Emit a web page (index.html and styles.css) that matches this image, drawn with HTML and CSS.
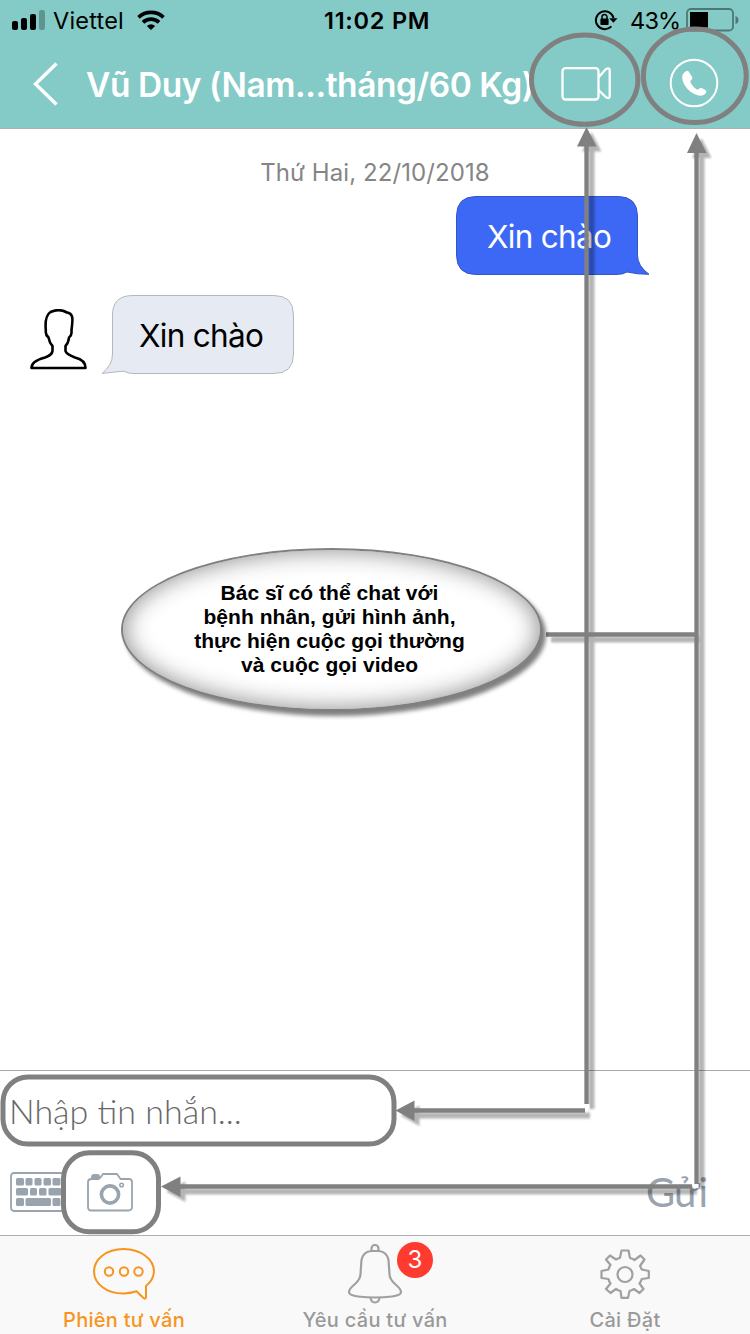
FILE: index.html
```
<!DOCTYPE html>
<html lang="vi">
<head>
<meta charset="utf-8">
<title>Chat</title>
<link rel="stylesheet" href="styles.css">
</head>
<body>
<div class="screen">
  <header class="header">
    <div class="status">
      <div class="status-left">
        <svg class="signal" width="34" height="20" viewBox="0 0 34 20"><rect x="0" y="11" width="6" height="9" rx="2"/><rect x="9" y="8" width="6" height="12" rx="2"/><rect x="18" y="4" width="6" height="16" rx="2"/><rect x="27" y="0" width="6" height="20" rx="2" opacity=".27"/></svg>
        <span class="carrier">Viettel</span>
        <svg class="wifi" width="28" height="20" viewBox="0 0 28 20" fill="none" stroke="#000" stroke-width="3.7"><path d="M1.5 7.4A18.2 18.2 0 0 1 26.5 7.4"/><path d="M6 12.400A11.5 11.5 0 0 1 22 12.400"/><path d="M9.8 15.9Q14 12.5 18.2 15.9L14 20Z" fill="#000" stroke="none"/></svg>
      </div>
      <span class="clock">11:02 PM</span>
      <div class="status-right">
        <svg width="24" height="22" viewBox="0 0 24 22"><path d="M17.4 17.4A9 9 0 1 1 19.6 9" fill="none" stroke="#000" stroke-width="2"/><path d="M15.2 9.2h8.4l-4.2 4.6z"/><rect x="6.4" y="9.5" width="8.2" height="6.5" rx="1"/><path d="M8 10V8a2.5 2.5 0 0 1 5 0v2" fill="none" stroke="#000" stroke-width="1.5"/></svg>
        <span class="percent">43%</span>
        <svg class="battery" width="54" height="24" viewBox="0 0 54 24"><rect x="1" y="1" width="46" height="21.5" rx="4" fill="none" stroke="#4d7975" stroke-width="1.800"/><rect x="4" y="4" width="18" height="15.5"/><path d="M49.5 8q3 1 3 4t-3 4z" fill="#4d7975"/></svg>
      </div>
    </div>
    <div class="nav">
      <svg class="back" width="26" height="44" viewBox="0 0 26 44"><path d="M23.5 1.5L2.5 22L23.5 42.5" fill="none" stroke="#fff" stroke-width="3.4"/></svg>
      <h1 class="title">Vũ Duy (Nam...tháng/60 Kg)</h1>
      <svg class="video" width="50" height="36" viewBox="0 0 50 36" fill="none" stroke="#fff" stroke-width="2.3" stroke-linejoin="round"><rect x="1.5" y="2.2" width="36" height="31.3" rx="3"/><path d="M37.5 11.5L45 3Q48.7 1.2 48.7 4.5V30Q48.7 33.2 45 31.3L37.5 24"/></svg>
      <svg class="phone" width="50" height="50" viewBox="0 0 50 50"><circle cx="25" cy="25" r="23.3" fill="none" stroke="#fff" stroke-width="2"/><path d="M17 13.200Q18.800 12 20 14L23 18.700Q24 20.600 22.300 22Q20.700 23.200 21.700 25Q24 29 27.500 31.200Q29 32.200 30.200 30.800Q31.500 29.200 33.300 30.300L36.700 32.300Q38 33.400 37 35Q34.700 38.200 31 37.800Q24.500 37 19 31.500Q13.500 25.500 13.200 19.500Q13.200 15.300 17 13.200Z" fill="#fff"/></svg>
    </div>
  </header>

  <main class="chat">
    <div class="date"><span>Thứ Hai, 22/10/2018</span></div>
    <div class="row sent">
      <div class="bubble">
        <svg class="shape" width="194" height="80" viewBox="0 0 194 80"><path d="M20 .5H162Q181.500 .5 181.500 20V59Q181.500 70 193 78.300Q182 78.500 171 76Q167 78.500 160 78.500H20Q.5 78.500 .5 59V20Q.5 .5 20 .5Z" fill="#3d68f5" stroke="#3457c6"/></svg>
        <span class="message">Xin chào</span>
      </div>
    </div>
    <div class="row received">
      <svg class="avatar" width="58" height="62" viewBox="0 0 58 62"><path d="M1.500 59H55.500Q55.500 51 45 48.500Q36 45 35.500 42V37Q38.500 34 39 28.500Q42 26 41.500 22.500V21Q43 10 42 7.500Q41 4 37 3.500Q29 -1 20.500 3Q14.500 7 15.800 21V22.500Q15.500 26 18.500 28.500Q19.500 34 22.500 37V42Q22 46 15 48.500Q1.500 52 1.500 59Z" fill="#fff" stroke="#000" stroke-width="2.6" stroke-linejoin="round"/></svg>
      <div class="bubble">
        <svg class="shape" width="194" height="80" viewBox="0 0 194 80"><path d="M32 .5H173Q192.500 .5 192.500 20V59Q192.500 78.500 173 78.500H32Q27 78.500 23 76.200Q12 77 1 78.500Q11.500 70 11.500 59V20Q11.500 .5 32 .5Z" fill="#e6eaf2" stroke="#b4b8bc"/></svg>
        <span class="message">Xin chào</span>
      </div>
    </div>
  </main>

  <section class="composer">
    <div class="field">Nhập tin nhắn...</div>
    <div class="tools">
      <svg class="keyboard" width="52" height="40" viewBox="0 0 52 40" fill="#9aa4af"><rect x="1" y="1" width="56" height="38" rx="3" fill="none" stroke="#9aa4af" stroke-width="1.800"/><rect x="6" y="6" width="8" height="7.500" rx="1.500"/><rect x="15.500" y="6" width="7" height="7.500" rx="1.500"/><rect x="24.500" y="6" width="7" height="7.500" rx="1.500"/><rect x="33.500" y="6" width="7.500" height="7.500" rx="1.500"/><rect x="42.500" y="6" width="8" height="7.500" rx="1.500"/><rect x="6" y="16" width="12" height="7.500" rx="1.500"/><rect x="20" y="16" width="7" height="7.500" rx="1.500"/><rect x="29" y="16" width="7.500" height="7.500" rx="1.500"/><rect x="38.500" y="16" width="13" height="7.500" rx="1.500"/><rect x="6" y="26" width="8" height="8" rx="1.500"/><rect x="15.500" y="26" width="25.500" height="8" rx="1.500"/><rect x="42.500" y="26" width="8" height="8" rx="1.500"/></svg>
      <svg class="camera" width="46" height="39" viewBox="0 0 46 39" fill="none" stroke="#9aa4af" stroke-width="1.800" stroke-linejoin="round"><path d="M4.500 6H11.500L13.500 4.500L16 1H30L33.500 6H42Q45 6 45 9V34Q45 37.500 41.500 37.500H4Q1 37.500 1 34V9Q1 6 4.500 6Z"/><path d="M5 5V3.500Q5 2 7 2H10Q12 2 12 3.500V5Z" fill="#9aa4af"/><circle cx="23" cy="21.500" r="8.600" stroke-width="3.600"/><circle cx="34.600" cy="12" r="1.800" stroke-width="1.500"/></svg>
      <span class="send">Gửi</span>
    </div>
  </section>

  <nav class="tabs">
    <div class="tab active">
      <svg width="64" height="56" viewBox="0 0 64 56" fill="none" stroke="#f7941e" stroke-width="2"><path d="M44.500 45.300Q38 47.600 31.500 47.500C14 47.500 2 37.500 2 25.500S14 3 31.500 3 62 13.500 62 25.500Q61.500 34 54 40V51Q53.500 54 51 51.500Z" stroke-linejoin="round"/><circle cx="17" cy="25.500" r="4.200"/><circle cx="32" cy="25.500" r="4.200"/><circle cx="46.500" cy="25.500" r="4.200"/></svg>
      <span class="label first">Phiên tư vấn</span>
    </div>
    <div class="tab">
      <div class="icon-wrap">
        <svg width="54" height="60" viewBox="0 0 54 60" fill="none" stroke="#a0a0a0" stroke-width="2.200"><path d="M23.500 7V4.500A3.500 3.500 0 0 1 30.500 4.500V7"/><path d="M23 7H31Q39 8 40.500 16L41.500 30Q41.500 35 47 40Q53 45 53 48Q53 51.500 44 52.500Q27 54.500 10 52.500Q1 51.500 1 48Q1 45 7 40Q12.500 35 12.500 30L13.500 16Q15 8 23 7Z"/><path d="M22.500 53.500Q23 58.500 27 58.500T31.500 53.500"/></svg>
        <span class="badge">3</span>
      </div>
      <span class="label">Yêu cầu tư vấn</span>
    </div>
    <div class="tab">
      <svg width="50" height="50" viewBox="0 0 50 50" fill="none" stroke="#a0a0a0" stroke-width="2.200" stroke-linejoin="round"><path d="M21.500 1.500H28.500L30 9Q32.500 9.500 34.500 11L40.500 6.500L44.500 10.500L40 17Q41.300 19 41.700 20.500L48.800 22V29L41.700 30Q41 32.500 39.500 34.500L43.500 40L39.500 44L34 40Q31.500 41.500 29.500 42L28 48.800H21.500L20.500 42Q18 41.500 16 40L10.500 44L6 40L10.500 34.500Q9 32.500 8.500 30L1.500 29V22L8.500 20.500Q9 18 10.500 16L6 10.500L10 6.500L16 10.500Q18 9.300 20 8.800Z"/><circle cx="25" cy="25.500" r="7.500"/></svg>
      <span class="label last">Cài Đặt</span>
    </div>
  </nav>

  <!-- Help annotations floating over the chat screen -->
  <svg class="annotations" width="750" height="1334" viewBox="0 0 750 1334">
    <defs><filter id="shade" filterUnits="userSpaceOnUse" x="0" y="0" width="750" height="1334"><feGaussianBlur stdDeviation="1.200"/></filter>
    <g id="arrows"><path d="M586.500 145V1104M696.500 151V1184M546 634.500H698M413 1110.500H585M179 1186.500H692" fill="none"/><path d="M586.500 127L596.500 146.500H577ZM696.500 133L706.500 153H687ZM395.500 1110.500L414.500 1100.500V1121ZM161 1186.500L180.500 1176.500V1197Z" stroke="none"/></g></defs>
    <use href="#arrows" x="5" y="5" fill="#000" stroke="#000" stroke-width="6" opacity=".29" filter="url(#shade)"/>
    <path d="M584.500 1104h5v5h-5zM692.500 1184h6v4h-6z" fill="#fff"/>
    <use href="#arrows" fill="#808080" stroke="#808080" stroke-width="4.300"/>
    <g fill="none" stroke="#808080" stroke-width="5"><ellipse cx="584.700" cy="79.700" rx="53.200" ry="44.600"/><ellipse cx="694.800" cy="75.800" rx="51.400" ry="46.700"/><rect x="3" y="1077" width="391" height="67" rx="25"/><rect x="63.500" y="1152.800" width="95" height="79" rx="26"/></g>
  </svg>
  <div class="callout"><p>Bác sĩ có thể chat với<br>bệnh nhân, gửi hình ảnh,<br>thực hiện cuộc gọi thường<br>và cuộc gọi video</p></div>
</div>
</body>
</html>
```

FILE: styles.css
```
* { box-sizing: border-box; }
body { margin: 0; background: #fff; font-family: Inter, "Noto Sans", sans-serif; }
svg { display: block; flex: none; }
.screen { position: relative; width: 750px; height: 1334px; display: flex; flex-direction: column; overflow: hidden; white-space: nowrap; }
.header { height: 129px; background: #84cbc7; border-bottom: 1px solid #b0b0b0; }
.status { height: 40px; display: grid; grid-template-columns: 1fr auto 1fr; align-items: center; padding: 0 12px; font-size: 23.5px; }
.status-left, .status-right { display: flex; align-items: center; }
.carrier { width: 71px; margin-left: 7px; letter-spacing: .2px; }
.wifi { margin-left: 13px; }
.clock { font-weight: 600; width: 102px; letter-spacing: .75px; }
.status-right { justify-content: flex-end; margin-right: -2px; }
.percent { width: 49px; margin: 0 7px 0 12px; letter-spacing: -.8px; }
.nav { height: 88px; display: flex; align-items: center; padding-left: 33px; }
.title { width: 446px; margin: 1px 0 0 27px; color: #fff; font-size: 33.5px; font-weight: 600; line-height: 44px; letter-spacing: -.45px; }
.video { margin-left: 29px; margin-top: -1px; }
.phone { margin-left: 58px; margin-top: -2px; }
.chat { flex: 1; padding-top: 28px; }
.date { height: 30px; text-align: center; color: #858585; font-size: 24px; line-height: 32px; letter-spacing: .08px; }
.row { display: flex; }
.sent { justify-content: flex-end; padding: 9px 100px 0 0; }
.received { align-items: center; padding: 19px 0 0 30px; }
.bubble { position: relative; width: 194px; height: 80px; display: flex; align-items: center; padding-left: 31px; font-size: 31.5px; letter-spacing: -.7px; color: #fff; }
.received .bubble { margin-left: 13px; padding-left: 38px; color: #000; }
.avatar { margin-top: 9px; }
.shape { position: absolute; inset: 0; }
.message { position: relative; }
.composer { height: 165px; border-top: 1px solid #aaa; font-family: Lato, "Noto Sans", sans-serif; }
.field { height: 81px; padding-left: 9px; line-height: 79px; font-size: 34px; font-weight: 300; color: #686868; }
.tools { height: 80px; display: flex; align-items: center; padding-left: 10px; }
.camera { margin-left: 25px; }
.send { margin-left: 513px; color: #9aa4af; font-size: 40px; letter-spacing: -.8px; }
.tabs { height: 99px; background: #f9f9f9; border-top: 1px solid #adadad; display: grid; grid-template-columns: repeat(3, 1fr); }
.tab { display: flex; flex-direction: column; align-items: center; justify-content: space-between; padding-top: 10px; color: #999; font-size: 20px; }
.tab.active { color: #f7941e; padding-right: 2px; }
.tab:nth-child(2) { padding-top: 8px; }
.tab:nth-child(3) { padding-top: 13px; }
.label { line-height: 28px; font-weight: 500; letter-spacing: .28px; }
.icon-wrap { position: relative; }
.badge { position: absolute; left: 49px; top: -2px; width: 36px; height: 36px; border-radius: 50%; background: #ff3b30; color: #fff; font-size: 24px; line-height: 36px; text-align: center; }
.annotations { position: absolute; inset: 0; }
.callout { position: absolute; left: 121px; top: 548px; width: 421px; height: 163px; border: 2px solid #808080; border-radius: 50%; background: #fff; box-shadow: inset 0 0 24px #888, 4px 5px 4px rgba(0,0,0,.5); text-align: center; color: #000; font: bold 21px/24px "Liberation Sans", Arial, sans-serif; letter-spacing: .05px; }
.callout p { margin: 31px 4px 0 0; }
```
